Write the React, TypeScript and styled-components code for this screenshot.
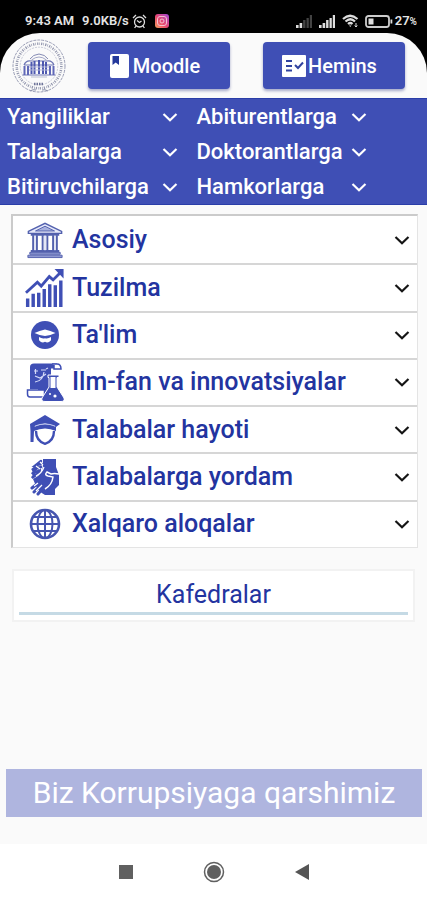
import React from 'react';
import styled, { createGlobalStyle } from 'styled-components';

const blue = '#3f4fb5';
const navy = '#2334a0';

const GlobalStyle = createGlobalStyle`
  * { box-sizing: border-box; }
  body { margin: 0; background: #000; font-family: Roboto, "Liberation Sans", sans-serif; }
  button { font: inherit; border: 0; padding: 0; margin: 0; cursor: pointer; background: none; }
  svg { display: block; flex: none; }
`;

const Screen = styled.div`
  min-height: 100vh;
  display: flex;
  flex-direction: column;
`;

const StatusBar = styled.div`
  height: 33px;
  padding: 9px 10px 0 25px;
  display: flex;
  align-items: center;
  justify-content: space-between;
  color: #e4e4e4;
  font-size: 13px;
  line-height: 24px;
  font-weight: 600;
`;

const StatusGroup = styled.div<{ $gap: number }>`
  display: flex;
  align-items: center;
  gap: ${(p) => p.$gap}px;
`;

const PercentSign = styled.span`
  font-size: 10px;
`;

const Page = styled.div`
  flex: 1;
  display: flex;
  flex-direction: column;
  background: #fafafa;
  border-radius: 40px 40px 0 0;
`;

const Header = styled.header`
  display: flex;
  align-items: center;
  gap: 33px;
  height: 65px;
  padding: 0 22px 0 11px;
`;

const CrestSlot = styled.div`
  display: flex;
  width: 44px;
`;

const AppButton = styled.button`
  flex: 1;
  height: 47px;
  display: flex;
  align-items: center;
  justify-content: center;
  gap: 1px;
  padding-right: 10px;
  color: #fff;
  background: ${blue};
  border-radius: 4px;
  box-shadow: 0 2px 3px rgba(40, 50, 130, 0.4);
  font-size: 20px;
  font-weight: 500;
`;

const Menu = styled.nav`
  display: grid;
  grid-template-columns: 1fr 1fr;
  grid-auto-rows: 35px;
  column-gap: 19px;
  padding: 0 60px 0 7px;
  background: ${blue};
  border-top: 1px solid #2a3da8;
  border-bottom: 1px solid #2a3da8;
`;

const MenuButton = styled.button`
  display: flex;
  align-items: center;
  justify-content: space-between;
  color: #fff;
  font-size: 22px;
  font-weight: 500;
`;

const Sections = styled.ul`
  list-style: none;
  margin: 9px 9px 0 11px;
  padding: 0;
  min-height: 334px;
  display: grid;
  grid-auto-rows: 1fr;
  background: #fff;
  border: 1px solid #e4e4e4;
  border-left: 2px solid #cbcbcb;
  border-top: 2px solid #cbcbcb;
`;

const SectionItem = styled.li`
  display: flex;
  & + & { border-top: 2px solid #d6d6d6; }
`;

const SectionButton = styled.button`
  flex: 1;
  display: grid;
  grid-template-columns: 40px 1fr 16px;
  align-items: center;
  column-gap: 7px;
  padding: 0 7px 0 12px;
  text-align: left;
  color: ${navy};
  font-size: 25px;
  line-height: 30px;
  font-weight: 500;
`;

const IconSlot = styled.span`
  display: grid;
  place-items: center;
  width: 40px;
`;

const Departments = styled.button`
  margin: 21px 12px 0 12px;
  padding: 7px 5px 5px;
  background: #fff;
  border: 2px solid #f2f2f2;
`;

const DepartmentsLabel = styled.span`
  display: block;
  border-bottom: 3px solid #c5dae5;
  color: ${navy};
  font-size: 25px;
  line-height: 34px;
`;

const Banner = styled.div`
  margin: auto 5px 27px 6px;
  background: #afb5df;
  color: #fff;
  text-align: center;
  font-size: 30px;
  line-height: 48px;
`;

const SystemBar = styled.footer`
  height: 56px;
  display: flex;
  align-items: center;
  justify-content: center;
  gap: 66px;
  background: #fff;
`;

const SystemButton = styled.button`
  width: 22px;
  height: 22px;
  display: grid;
  place-items: center;
`;

const Chevron = ({ color }: { color: string }) => (
  <svg width="16" height="16" viewBox="0 0 16 16" fill="none" stroke={color} strokeWidth="2.2" aria-hidden="true">
    <path d="M1.5 5 8 11.2 14.5 5" />
  </svg>
);

const Signal = ({ faded }: { faded?: boolean }) => (
  <svg width="17" height="13" viewBox="0 0 17 13" fill="#ddd">
    <path d="M0 10h2.6v3H0zM3.6 8h2.6v5H3.6z" />
    <path opacity={faded ? 0.3 : 1} d="M7.1 5h2.4v8H7.1zM10.5 3h2.3v10h-2.3zM13.8 0H16v13h-2.2z" />
  </svg>
);

const Alarm = () => (
  <svg width="15" height="15" viewBox="0 0 15 15" fill="none" stroke="#ddd" strokeWidth="1.3">
    <circle cx="7.5" cy="8" r="5" />
    <path d="M1 4 4 1M14 4l-3-3M5 6.5l2.5 2L9.5 7M4 12l-1.4 2M11 12l1.4 2" />
  </svg>
);

const Instagram = () => (
  <svg width="14" height="14" viewBox="0 0 14 14">
    <defs>
      <linearGradient id="insta" x1="0" y1="1" x2="1" y2="0">
        <stop offset="0" stopColor="#f5a05c" />
        <stop offset=".45" stopColor="#e6466e" />
        <stop offset="1" stopColor="#a04ad8" />
      </linearGradient>
    </defs>
    <rect width="14" height="14" rx="3" fill="url(#insta)" />
    <rect x="2.5" y="2.5" width="9" height="9" rx="2.5" fill="none" stroke="#f4bfd0" />
    <circle cx="7" cy="7" r="2" fill="none" stroke="#f4bfd0" />
  </svg>
);

const Wifi = () => (
  <svg width="17" height="14" viewBox="0 0 17 14" fill="none" stroke="#ddd" strokeWidth="2.2">
    <path d="M1 5q7-6.500 14.500 0M3.500 7.500q5-4.500 9.500 0M6 10q2.300-2 4.500 0" />
    <path d="m7 11.500 1.300 1.500 1.200-1.500z" fill="#ddd" stroke="none" />
    <path d="M14 9v4M12.700 11.500 14 13l1.300-1.500" strokeWidth="1" />
  </svg>
);

const Battery = () => (
  <svg width="28" height="13" viewBox="0 0 28 13">
    <rect x="1" y="1" width="23" height="11" rx="2.500" fill="none" stroke="#ccc" strokeWidth="1.800" />
    <path d="M3.500 3.500h5v6h-5zM25.500 4.500h1.800v4h-1.800z" fill="#ddd" />
  </svg>
);

const Crest = () => (
  <svg width="56" height="56" viewBox="0 0 56 56" fill="none" role="img" aria-label="University crest">
    <circle cx="28" cy="28" r="26" stroke="#8c91ab" strokeWidth=".9" strokeDasharray="3 1" />
    <circle cx="28" cy="28" r="22.300" stroke="#9296ad" strokeWidth="2.600" strokeDasharray="1.200 1 .6 1.300" />
    <circle cx="28" cy="28" r="18.800" stroke="#b4b7c8" strokeWidth=".7" strokeDasharray="2 1" />
    <path d="M19 21q3-4.500 9-5 6 .5 9 5" stroke="#858bb4" />
    <path d="M20.500 22q7.500-6 15 0" stroke="#a2a6c7" />
    <path d="M13 27q2-5 7-4h16q5-1 7 4M13 27h30M11.500 37h33" stroke="#6f77b4" strokeWidth="1.200" />
    <path d="M13.500 28v9M17 28v9M42.500 28v9M39 28v9" stroke="#6068b8" strokeWidth="2" />
    <path d="M20.500 24v12M23.500 23v13M28 22v14M32 23v13M35 24v12" stroke="#4d58b0" strokeWidth="2" />
    <path d="M18 29h20M18 32h20" stroke="#b0b4d8" />
    <path d="M20 39h16" stroke="#bbbfd0" />
    <path d="M23 46h10" stroke="#6e7499" strokeWidth="2.500" strokeDasharray="1.500 1" />
    <path d="M19 53q3-2 6-1M31 52q3-1 6 1" stroke="#898ea8" />
  </svg>
);

const BookIcon = () => (
  <svg width="24" height="28" viewBox="0 0 24 28" aria-hidden="true">
    <rect x="2" y="2" width="19" height="24" rx="2" fill="#fff" />
    <path d="M4.500 4h6.500v9L7.700 10.500 4.500 13z" fill="#24389b" />
  </svg>
);

const ChecklistIcon = () => (
  <svg width="26" height="24" viewBox="0 0 26 24" fill="none" aria-hidden="true">
    <rect x="1" y="1" width="24" height="22" rx="1" fill="#fff" />
    <path d="M5 7h6M5 12h6M5 16.500h6" stroke="#31439f" strokeWidth="2" />
    <path d="m14 11 3 3 5-5.500" stroke="#31439f" strokeWidth="2" />
  </svg>
);

const MuseumIcon = () => (
  <svg width="40" height="38" viewBox="0 0 40 40" fill="none" stroke="#5361ae">
    <path d="M2.500 11 20 2.500 37.500 11v2h-35z" fill="#e5e8fa" strokeWidth="1.500" />
    <path d="M10 10.500 20 5.500l10 5z" fill="#a9b2df" />
    <path d="M5 14.500h30M5 31.500h30" strokeWidth="2" />
    <path d="M7.500 15v16M11.500 15v16M17.500 15v16M22.500 15v16M28.500 15v16M32.500 15v16" strokeWidth="2" />
    <path d="M9.500 15v16M20 15v16M30.500 15v16" stroke="#c5cbea" />
    <path d="M4 33h32v2H4zM2 36h36v2.500H2z" fill="#8f99d2" />
  </svg>
);

const GrowthIcon = () => (
  <svg width="40" height="42" viewBox="0 0 42 42" fill={blue}>
    <path d="M1 32h3.600v9H1zM6.800 27h3.600v14H6.800zM12.600 26h3.600v15h-3.600zM18.400 22H22v19h-3.600zM24.200 17h3.600v24h-3.600zM30 18h3.600v23H30zM35.800 13h3.600v28h-3.600z" />
    <path d="M1 26 13 15l4 4 8.500-10 4 3.500L37 5" fill="none" stroke={blue} strokeWidth="3" />
    <path d="M31 1h9.500v10z" />
  </svg>
);

const EducationIcon = () => (
  <svg width="30" height="30" viewBox="0 0 30 30">
    <circle cx="15" cy="15" r="14" fill={blue} />
    <path d="M4.500 13q5-2.500 10.500-3.500 5.500 1 10.500 3.500-5 2.500-10.500 3Q9.500 15.500 4.500 13z" fill="#fff" />
    <path d="M9 17q3 2 6 1.200 3 .8 6-1.200v3.300q-3 3.500-6 1.500-3 2-6-1.500z" fill="#fff" />
  </svg>
);

const ScienceIcon = () => (
  <svg width="38" height="40" viewBox="0 0 38 40">
    <path d="M4 27V5q0-3.500 4-3.500h23v5h-6V33H12v-6z" fill={blue} />
    <path d="M26 2h5q4 0 4 5h-7V3" fill="#fff" stroke={blue} strokeWidth="1.500" />
    <path d="M1.500 28h17v7H4q-2.500 0-2.500-3z" fill="#fff" stroke={blue} strokeWidth="1.500" />
    <path d="M8 9h4M9.500 7v5M15 8h5M20 7l2-1M9 20q8-1 9-10M9 14l5 2 6-4" fill="none" stroke="#d5daf8" strokeWidth="1.200" />
    <path d="M22 13h11v2.500h-2V25l7 11q1 3.500-3 3.500H19q-4 0-3-3.500l7-11v-9.500h-1z" fill={blue} stroke="#fff" />
    <path d="M24.500 15h5v11h-5z" fill="#fff" />
    <circle cx="29" cy="34" r="1.600" fill="#fff" />
    <circle cx="24" cy="32" r="1" fill="#fff" />
  </svg>
);

const StudentIcon = () => (
  <svg width="32" height="32" viewBox="0 0 32 32" fill={blue}>
    <path d="M1 10 16 1l15 9-4 3Q16 6 5 13v4l-.5 11H1.500V17z" />
    <path d="M5 13q11-6 22 0v4q-11-5-22 0z" />
    <path d="M7 17q0 10 9 12.800Q25 27 25 17" fill="none" stroke={blue} strokeWidth="2.400" />
    <path d="M6 12q10-4 20 0" fill="none" stroke="#bec5ec" />
  </svg>
);

const HelpIcon = () => (
  <svg width="30" height="38" viewBox="0 0 30 38" fill="none">
    <path d="M13 1h13v8l3 8v10l-4 4v6H15q-6-3-9-9L3 21l5-3 4-5 1-5z" fill={blue} />
    <path d="m11 3-5 4 6-1M8 7l-6 5 9-3M6 11l-4 5 8-4M5 16l-3 4 8-6" stroke={blue} strokeWidth="2.500" strokeLinecap="round" />
    <path d="M7 26 2 30M10 28l-6 6M14 29l-6 7" stroke={blue} strokeWidth="3" strokeLinecap="round" />
    <path d="M29 16q-5-1-8 0l-4-2q-3 3 1 4l5 1q-1 8-8 12" stroke="#fff" strokeWidth="1.500" />
    <path d="M14 9q-2 6-8 9M8 25l-4 3M12 27l-6 6M10 4l3 3M6 8l4 3" stroke="#fff" strokeWidth="1.200" />
  </svg>
);

const GlobeIcon = () => (
  <svg width="32" height="32" viewBox="0 0 32 32" fill="none" stroke="#4655b0" strokeWidth="2">
    <circle cx="16" cy="16" r="14" strokeWidth="2.600" />
    <ellipse cx="16" cy="16" rx="7.500" ry="14" />
    <path d="M16 2v28M2 16h28M4.500 9h23M4.500 23h23" />
  </svg>
);

const menuItems = ['Yangiliklar', 'Abiturentlarga', 'Talabalarga', 'Doktorantlarga', 'Bitiruvchilarga', 'Hamkorlarga'];

const sections = [
  { label: 'Asosiy', Icon: MuseumIcon },
  { label: 'Tuzilma', Icon: GrowthIcon },
  { label: "Ta'lim", Icon: EducationIcon },
  { label: 'Ilm-fan va innovatsiyalar', Icon: ScienceIcon },
  { label: 'Talabalar hayoti', Icon: StudentIcon },
  { label: 'Talabalarga yordam', Icon: HelpIcon },
  { label: 'Xalqaro aloqalar', Icon: GlobeIcon },
];

export default function App() {
  return (
    <Screen>
      <GlobalStyle />
      <StatusBar>
        <StatusGroup $gap={8}>
          <span>9:43 AM</span>
          <StatusGroup $gap={3}>
            <span>9.0KB/s</span>
            <Alarm />
          </StatusGroup>
          <Instagram />
        </StatusGroup>
        <StatusGroup $gap={6}>
          <Signal faded />
          <Signal />
          <Wifi />
          <StatusGroup $gap={2}>
            <Battery />
            <span>27<PercentSign>%</PercentSign></span>
          </StatusGroup>
        </StatusGroup>
      </StatusBar>
      <Page>
        <Header>
          <CrestSlot><Crest /></CrestSlot>
          <AppButton type="button"><BookIcon />Moodle</AppButton>
          <AppButton type="button"><ChecklistIcon />Hemins</AppButton>
        </Header>
        <Menu>
          {menuItems.map((label) => (
            <MenuButton key={label} type="button">
              {label}
              <Chevron color="#fff" />
            </MenuButton>
          ))}
        </Menu>
        <Sections>
          {sections.map(({ label, Icon }) => (
            <SectionItem key={label}>
              <SectionButton type="button">
                <IconSlot aria-hidden="true"><Icon /></IconSlot>
                {label}
                <Chevron color="#151515" />
              </SectionButton>
            </SectionItem>
          ))}
        </Sections>
        <Departments type="button">
          <DepartmentsLabel>Kafedralar</DepartmentsLabel>
        </Departments>
        <Banner>Biz Korrupsiyaga qarshimiz</Banner>
      </Page>
      <SystemBar>
        <SystemButton type="button" aria-label="Recent apps">
          <svg width="14" height="14" viewBox="0 0 14 14"><path d="M0 0h14v14H0z" fill="#606060" /></svg>
        </SystemButton>
        <SystemButton type="button" aria-label="Home">
          <svg width="22" height="22" viewBox="0 0 22 22">
            <circle cx="11" cy="11" r="9.500" fill="none" stroke="#606060" strokeWidth="1.500" />
            <circle cx="11" cy="11" r="7" fill="#606060" />
          </svg>
        </SystemButton>
        <SystemButton type="button" aria-label="Back">
          <svg width="14" height="16" viewBox="0 0 14 16"><path d="M14 0v16L0 8z" fill="#555" /></svg>
        </SystemButton>
      </SystemBar>
    </Screen>
  );
}
